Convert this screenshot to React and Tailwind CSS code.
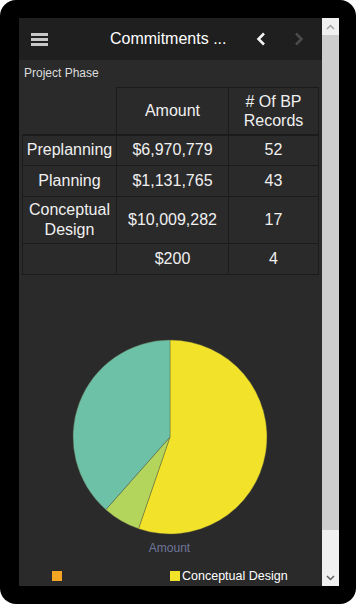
import React from "react";

const rows = [
  { phase: "Preplanning", amount: "$6,970,779", count: "52" },
  { phase: "Planning", amount: "$1,131,765", count: "43" },
  { phase: "Conceptual Design", amount: "$10,009,282", count: "17", tall: true },
  { phase: "", amount: "$200", count: "4" },
];

// pie order starts at 12 o'clock and goes clockwise
const slices = [
  { label: "", value: 200, color: "#f5a623" },
  { label: "Conceptual Design", value: 10009282, color: "#f2e229" },
  { label: "Planning", value: 1131765, color: "#b3d55b" },
  { label: "Preplanning", value: 6970779, color: "#6cc1a6" },
];

function Pie({ r = 97, size = 200 }) {
  const c = size / 2;
  const total = slices.reduce((s, x) => s + x.value, 0);
  let start = 0;
  return (
    <svg width={size} height={size} viewBox={`0 0 ${size} ${size}`}>
      {slices.map((s, i) => {
        const a0 = (start / total) * Math.PI * 2;
        start += s.value;
        const a1 = (start / total) * Math.PI * 2;
        const x0 = c + r * Math.sin(a0);
        const y0 = c - r * Math.cos(a0);
        const x1 = c + r * Math.sin(a1);
        const y1 = c - r * Math.cos(a1);
        const large = a1 - a0 > Math.PI ? 1 : 0;
        return (
          <path
            key={i}
            d={`M${c},${c} L${x0},${y0} A${r},${r} 0 ${large} 1 ${x1},${y1} Z`}
            fill={s.color}
            stroke="#5a5a40"
            strokeWidth="0.4"
          />
        );
      })}
    </svg>
  );
}

export default function App() {
  return (
    <div className="w-[356px] h-[604px] bg-white">
      <div
        className="w-[356px] h-[604px] bg-black rounded-[16px] flex pl-[19px] pt-[18px] pb-[18px] pr-[17px]"
        style={{ fontFamily: '"Liberation Sans", Arial, sans-serif' }}
      >
        {/* main panel */}
        <div className="w-[303px] h-[568px] bg-[#2a2a2a] overflow-hidden flex flex-col">
          {/* header */}
          <div className="h-[42px] shrink-0 bg-[#1f1f1f] flex items-center relative">
            <div className="ml-[12px] w-[17px] flex flex-col gap-[2px]">
              <div className="h-[3px] bg-[#c8c8c8]" />
              <div className="h-[3px] bg-[#c8c8c8]" />
              <div className="h-[3px] bg-[#c8c8c8]" />
            </div>
            <div className="ml-[62px] text-[16px] text-white whitespace-nowrap">Commitments ...</div>
            <svg className="ml-[30px]" width="10" height="14" viewBox="0 0 10 14">
              <path d="M8 1.5 L2.5 7 L8 12.5" stroke="#f2f2f2" strokeWidth="2.6" fill="none" />
            </svg>
            <svg className="ml-[28px]" width="10" height="14" viewBox="0 0 10 14">
              <path d="M2 1.5 L7.5 7 L2 12.5" stroke="#4a4a4a" strokeWidth="2.6" fill="none" />
            </svg>
          </div>

          {/* content */}
          <div className="flex flex-col">
            <div className="pl-[5px] pt-[6px] h-[27px] text-[12px] text-[#dddddd] leading-[14px]">Project Phase</div>
            <table className="ml-[3px] border-collapse table-fixed w-[296px] text-[16px] text-[#f0f0f0]">
              <colgroup>
                <col className="w-[94px]" />
                <col className="w-[112px]" />
                <col className="w-[90px]" />
              </colgroup>
              <thead>
                <tr className="h-[47px]">
                  <th className="border-r border-b-2 border-[#1b1b1b] font-normal" />
                  <th className="border border-b-2 border-[#1b1b1b] font-normal leading-[19px]">Amount</th>
                  <th className="border border-b-2 border-[#1b1b1b] font-normal leading-[19px]">
                    # Of BP
                    <br />
                    Records
                  </th>
                </tr>
              </thead>
              <tbody>
                {rows.map((r, i) => (
                  <tr key={i} className={r.tall ? "h-[47px]" : "h-[31px]"}>
                    <td className="border border-[#1b1b1b] text-center leading-[20px]">{r.phase}</td>
                    <td className="border border-[#1b1b1b] text-center">{r.amount}</td>
                    <td className="border border-[#1b1b1b] text-center">{r.count}</td>
                  </tr>
                ))}
              </tbody>
            </table>

            <div className="mt-[62px] flex justify-center pr-[2px]">
              <Pie />
            </div>
            <div className="text-center text-[12px] text-[#70759a] leading-[14px] mt-[4px] pr-[2px]">Amount</div>

            <div className="mt-[16px] grid grid-cols-[118px_1fr] pl-[33px] gap-y-[6px] text-[12.5px] text-white leading-[14px]">
              {slices.map((s, i) => (
                <div key={i} className="flex items-center gap-[2px] h-[10px]">
                  <div className="w-[10px] h-[10px]" style={{ backgroundColor: s.color }} />
                  <span>{s.label}</span>
                </div>
              ))}
            </div>
          </div>
        </div>

        {/* scrollbar */}
        <div className="w-[17px] h-[568px] bg-[#f0f0f0] flex flex-col">
          <div className="h-[17px] flex items-center justify-center">
            <svg width="9" height="6" viewBox="0 0 9 6">
              <path d="M1 5 L4.5 1.5 L8 5" stroke="#a3a3a3" strokeWidth="1.5" fill="none" />
            </svg>
          </div>
          <div className="h-[495px] mx-0 bg-[#cdcdcd]" />
          <div className="flex-1" />
          <div className="h-[17px] flex items-center justify-center">
            <svg width="9" height="6" viewBox="0 0 9 6">
              <path d="M1 1 L4.5 4.5 L8 1" stroke="#606060" strokeWidth="1.5" fill="none" />
            </svg>
          </div>
        </div>
      </div>
    </div>
  );
}
